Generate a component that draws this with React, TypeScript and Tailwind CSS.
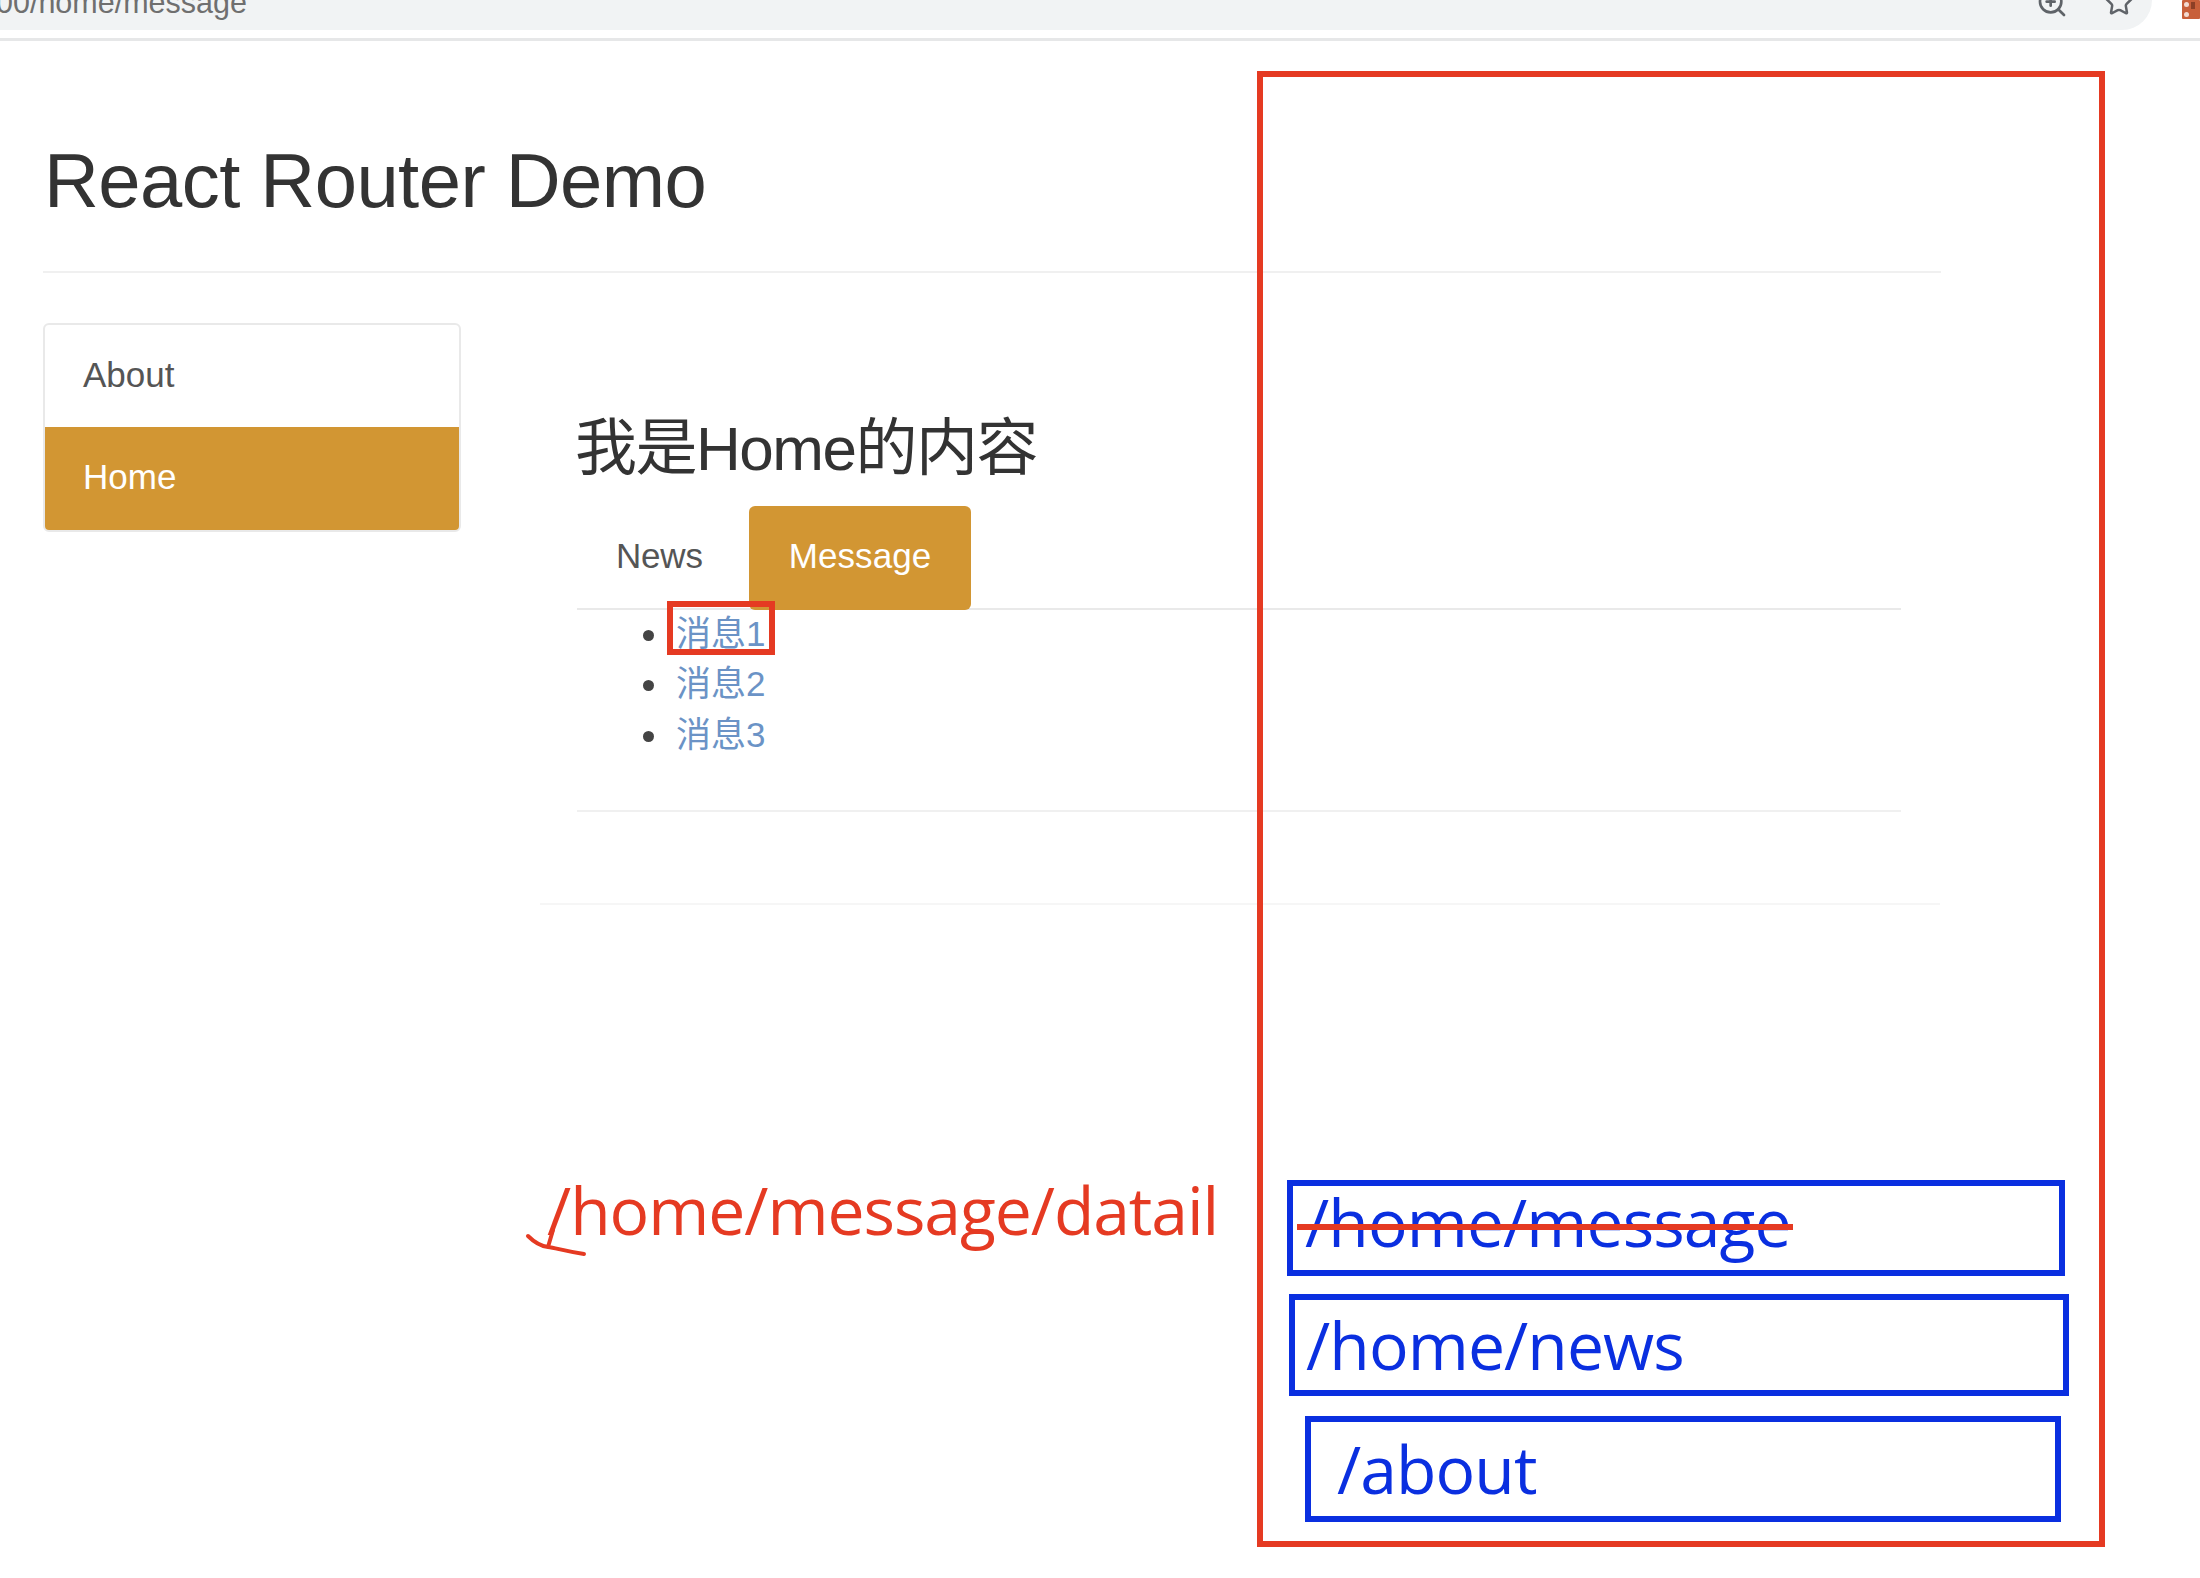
import React from "react";
import { ZoomIn, Star } from "lucide-react";

const sans = "[font-family:'Liberation_Sans','Noto_Sans_CJK_SC',sans-serif]";

function PathBox({ className, children }: { className: string; children: React.ReactNode }) {
  return (
    <div className={`flex items-center border-[6px] border-[#0a2fe0] text-[#0a2fe0] text-[66px] leading-none [font-family:'Open_Sans',sans-serif] tracking-[-0.9px] ${className}`}>
      {children}
    </div>
  );
}

function Msg({ children }: { children: React.ReactNode }) {
  return (
    <li className="flex items-center h-[50.5px]">
      <span className="w-[11px] h-[11px] rounded-full bg-[#444]" />
      <span className="ml-[22px] text-[#6b93c6] tracking-[0px] pb-[3px]">{children}</span>
    </li>
  );
}

export default function App() {
  return (
    <div className={`relative w-[2200px] h-[1578px] overflow-hidden bg-white ${sans}`}>
      {/* browser chrome */}
      <div className="h-[41px] border-b-[3px] border-[#e6e7e8] flex items-start">
        <div className="relative w-[2152px] h-[30px] bg-[#f1f3f4] rounded-br-[30px] flex items-start overflow-hidden">
          <span className="ml-[-4px] mt-[-16px] text-[30.5px] leading-[36px] text-[#6f6f6f]">00/home/message</span>
          <div className="ml-auto mr-[18px] flex items-start gap-[36px] mt-[-13px]">
            <ZoomIn className="w-[32px] h-[32px] text-[#5f6368]" strokeWidth={2} />
            <Star className="w-[30px] h-[30px] text-[#5f6368]" strokeWidth={2} />
          </div>
        </div>
        <div className="ml-[30px] w-[18px] h-[19px] bg-[#c8603a] rounded-[1px] flex flex-wrap items-start gap-[2px] p-[2px]">
          <span className="w-[5px] h-[5px] rounded-full bg-[#f3d9cf]" />
          <span className="w-[4px] h-[7px] bg-[#8c3f25]" />
          <span className="w-[5px] h-[5px] mt-[1px] rounded-full bg-[#f3d9cf]" />
        </div>
      </div>

      {/* page */}
      <div className="ml-[43px] w-[1898px]">
        <div className="h-[232px] border-b-2 border-[#f0f0f0] flex items-start">
          <h1 className="mt-[98px] ml-[1px] text-[76px] leading-[84px] text-[#333] tracking-[-0.55px]">React Router Demo</h1>
        </div>
        <div className="mt-[50px] flex">
          <div className="w-[418px] h-[209px] rounded-[6px] border-2 border-[#e9e9e9] overflow-hidden flex flex-col">
            <div className="h-[102px] pb-[2px] flex items-center pl-[38px] text-[35px] text-[#555]">About</div>
            <div className="flex-1 flex items-center pl-[38px] pb-[2px] text-[35px] text-white bg-[#d29633]">Home</div>
          </div>
          <div className="ml-[79px] w-[1400px] h-[582px] border-b-2 border-[#f6f6f6]">
            <div className="ml-[37px] w-[1324px]">
              <h2 className="mt-[88px] ml-[-2px] text-[62px] leading-[76px] text-[#333] tracking-[-1.5px]">我是Home的内容</h2>
              <div className="mt-[19px] h-[104px] border-b-2 border-[#e9e9e9] flex pl-[39px]">
                <div className="w-[133px] pb-[2px] flex items-center text-[35px] tracking-[-0.2px] text-[#555]">News</div>
                <div className="w-[222px] h-[104px] pb-[3px] rounded-[6px] flex items-center justify-center bg-[#d29633] text-white text-[35px] tracking-[0.1px]">Message</div>
              </div>
              <ul className="h-[202px] border-b-2 border-[#f0f0f0] pl-[66px] text-[35px]">
                <Msg>消息1</Msg>
                <Msg>消息2</Msg>
                <Msg>消息3</Msg>
              </ul>
            </div>
          </div>
        </div>
      </div>

      {/* annotation: link highlight */}
      <div className="absolute left-[667px] top-[601px] w-[108px] h-[54px] border-[6px] border-[#e53a22]" />

      {/* annotation: path text */}
      <div className="absolute left-[547px] top-[1167px] text-[66px] leading-[84px] text-[#e53a22] [font-family:'Open_Sans',sans-serif] tracking-[-1.05px]">/home/message/datail</div>
      <svg className="absolute left-[520px] top-[1180px]" width="70" height="80" viewBox="0 0 70 80" fill="none" stroke="#e53a22" strokeWidth="4" strokeLinecap="round" strokeLinejoin="round">
        <path d="M8 56 C14 62 20 66 28 67 C36 68 44 71 64 74 M28 67 L33 50" />
      </svg>

      {/* annotation: stack frame */}
      <div className="absolute left-[1257px] top-[71px] w-[848px] h-[1476px] border-[6px] border-[#e53a22] flex flex-col justify-end pb-[19px]">
        <PathBox className="ml-[24px] w-[778px] h-[96px] pl-[12px] pb-[15px] relative">
          /home/message
          <div className="absolute left-[4px] top-[38px] w-[496px] h-[6px] bg-[#e53a22]" />
        </PathBox>
        <PathBox className="ml-[26px] mt-[18px] w-[780px] h-[102px] pl-[11px] pb-[3px]">/home/news</PathBox>
        <PathBox className="ml-[42px] mt-[20px] w-[756px] h-[106px] pl-[26px] pb-[2px]">/about</PathBox>
      </div>
    </div>
  );
}
